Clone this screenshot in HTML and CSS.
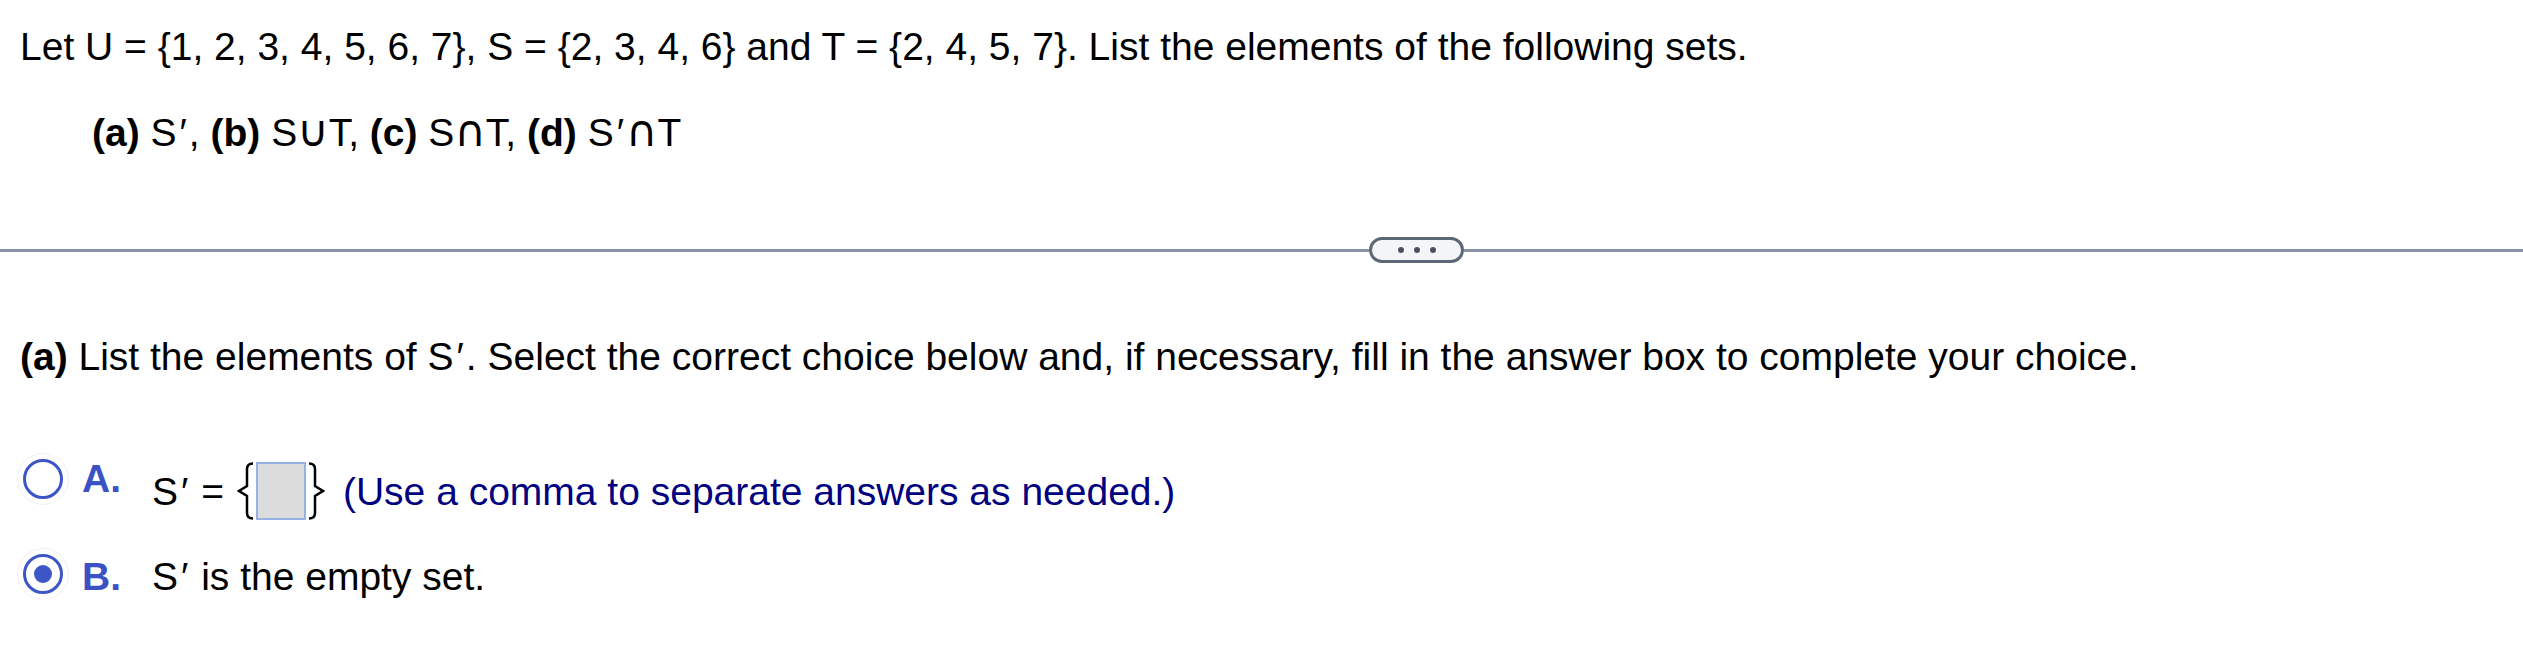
FILE: index.html
```html
<!DOCTYPE html>
<html lang="en">
<head>
    <meta charset="UTF-8">
    <title>Sets question</title>
    <link rel="stylesheet" href="styles.css">
</head>
<body>
    <div class="question">
        <p class="intro">Let U = {1, 2, 3, 4, 5, 6, 7}, S = {2, 3, 4, 6} and T = {2, 4, 5, 7}. List the elements of the following sets.</p>
        <p class="parts"><b>(a)</b> S<span class="prime">&#8242;</span>, <b>(b)</b> S<span class="op">&#8746;</span>T, <b>(c)</b> S<span class="op">&#8745;</span>T, <b>(d)</b> S<span class="prime">&#8242;</span><span class="op">&#8745;</span>T</p>
    </div>

    <div class="divider">
        <span class="rule rule-left"></span>
        <button class="more" type="button"><i></i><i></i><i></i></button>
        <span class="rule rule-right"></span>
    </div>

    <div class="answer">
        <p class="prompt"><b>(a)</b> List the elements of S<span class="prime">&#8242;</span>. Select the correct choice below and, if necessary, fill in the answer box to complete your choice.</p>

        <div class="choice choice-a">
            <span class="radio"></span>
            <span class="label">A.</span>
            <span class="content">
                <span>S<span class="prime">&#8242;</span> =</span>
                <svg class="brace brace-left" width="18" height="58" viewBox="0 0 18 58">
                    <path d="M16 1.5 Q10 1.5 10 7 L10 24 L2 29 L10 34 L10 51 Q10 56.5 16 56.5" />
                </svg>
                <span class="answer-box"></span>
                <svg class="brace" width="18" height="58" viewBox="0 0 18 58">
                    <path d="M2 1.5 Q8 1.5 8 7 L8 24 L16 29 L8 34 L8 51 Q8 56.5 2 56.5" />
                </svg>
                <span class="hint">(Use a comma to separate answers as needed.)</span>
            </span>
        </div>

        <div class="choice choice-b">
            <span class="radio checked"></span>
            <span class="label">B.</span>
            <span class="content"><span>S<span class="prime">&#8242;</span> is the empty set.</span></span>
        </div>
    </div>
</body>
</html>
```

FILE: styles.css
```css
body {
    margin: 0;
    font-family: "Liberation Sans", Arial, sans-serif;
    font-size: 39px;
    line-height: 45px;
    color: #000;
    background: #fff;
}

p {
    margin: 0;
}

/* set operators and primes, as the math renderer spaces them */
.op {
    font-family: "DejaVu Sans", sans-serif;
    font-size: 43px;
    line-height: 0;
}
.prime {
    margin-left: 3px;
    margin-right: 2px;
}

.question {
    padding-left: 20px;
}
.intro {
    padding-top: 24px;
}
.parts {
    margin-top: 41px;
    padding-left: 72px;
}

/* separator with the "..." toggle */
.divider {
    display: flex;
    align-items: center;
    margin-top: 82px;
    height: 26px;
}
.rule {
    height: 3px;
    background-color: #8a93a3;
}
.rule-left {
    width: 1369px;
}
.rule-right {
    flex: 1;
}
.more {
    display: flex;
    align-items: center;
    justify-content: center;
    gap: 10px;
    box-sizing: border-box;
    width: 95px;
    height: 26px;
    padding: 0;
    border: 3px solid #5d6877;
    border-radius: 13px;
    background-color: #f4f5f7;
}
.more i {
    width: 6px;
    height: 6px;
    border-radius: 50%;
    background-color: #4a5260;
}

.answer {
    padding-left: 20px;
}
.prompt {
    margin-top: 71px;
}

.choice {
    display: flex;
    align-items: flex-start;
}
.choice-a {
    margin-top: 77px;
}
.choice-b {
    margin-top: 34px;
}

.radio {
    position: relative;
    box-sizing: border-box;
    width: 40px;
    height: 40px;
    margin-left: 3px;
    margin-top: 3px;
    border: 3px solid #3d56c6;
    border-radius: 50%;
    outline: 1px solid #f1f1f4;
    outline-offset: 5px;
}
.choice-b .radio {
    margin-top: 0;
}
.radio.checked::after {
    content: "";
    position: absolute;
    left: 8px;
    top: 8px;
    width: 18px;
    height: 18px;
    border-radius: 50%;
    background-color: #3d56c6;
}

.label {
    width: 70px;
    margin-left: 19px;
    font-weight: bold;
    color: #3b52c4;
}

.content {
    display: flex;
    align-items: center;
}
.choice-a .content {
    margin-top: 6px;
    height: 58px;
}
.brace {
    display: block;
}
.brace path {
    fill: none;
    stroke: #000;
    stroke-width: 2.5;
    stroke-linejoin: miter;
}
.brace-left {
    margin-left: 13px;
}
.answer-box {
    box-sizing: border-box;
    width: 50px;
    height: 58px;
    margin: 0 1px;
    border: 2px solid #97b2e4;
    background-color: #dcdcdc;
}
.hint {
    margin-left: 18px;
    color: #000080;
}
```
